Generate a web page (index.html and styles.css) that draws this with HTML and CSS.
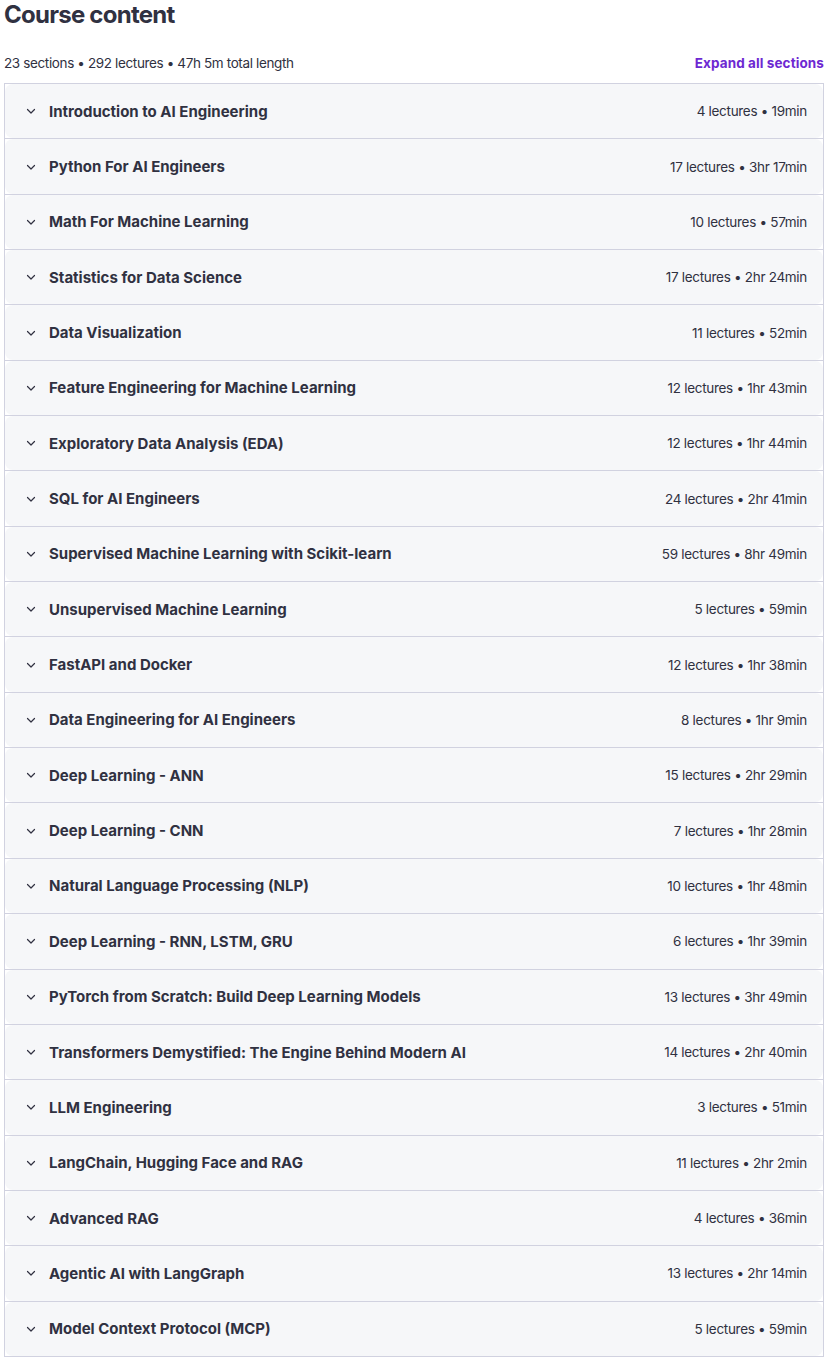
FILE: index.html
```html
<!DOCTYPE html>
<html lang="en">
<head>
  <meta charset="utf-8">
  <title>Course content</title>
  <link rel="stylesheet" href="styles.css">
</head>
<body>
  <section class="curriculum">
    <h2 class="curriculum-title">Course content</h2>

    <div class="curriculum-bar">
      <span class="curriculum-summary">23 sections • 292 lectures • 47h 5m total length</span>
      <button type="button" class="expand-all">Expand all sections</button>
    </div>

    <div class="accordion" id="accordion"></div>
  </section>

  <script>
    var sections = [
      ['Introduction to AI Engineering', '4 lectures • 19min'],
      ['Python For AI Engineers', '17 lectures • 3hr 17min'],
      ['Math For Machine Learning', '10 lectures • 57min'],
      ['Statistics for Data Science', '17 lectures • 2hr 24min'],
      ['Data Visualization', '11 lectures • 52min'],
      ['Feature Engineering for Machine Learning', '12 lectures • 1hr 43min'],
      ['Exploratory Data Analysis (EDA)', '12 lectures • 1hr 44min'],
      ['SQL for AI Engineers', '24 lectures • 2hr 41min'],
      ['Supervised Machine Learning with Scikit-learn', '59 lectures • 8hr 49min'],
      ['Unsupervised Machine Learning', '5 lectures • 59min'],
      ['FastAPI and Docker', '12 lectures • 1hr 38min'],
      ['Data Engineering for AI Engineers', '8 lectures • 1hr 9min'],
      ['Deep Learning - ANN', '15 lectures • 2hr 29min'],
      ['Deep Learning - CNN', '7 lectures • 1hr 28min'],
      ['Natural Language Processing (NLP)', '10 lectures • 1hr 48min'],
      ['Deep Learning - RNN, LSTM, GRU', '6 lectures • 1hr 39min'],
      ['PyTorch from Scratch: Build Deep Learning Models', '13 lectures • 3hr 49min'],
      ['Transformers Demystified: The Engine Behind Modern AI', '14 lectures • 2hr 40min'],
      ['LLM Engineering', '3 lectures • 51min'],
      ['LangChain, Hugging Face and RAG', '11 lectures • 2hr 2min'],
      ['Advanced RAG', '4 lectures • 36min'],
      ['Agentic AI with LangGraph', '13 lectures • 2hr 14min'],
      ['Model Context Protocol (MCP)', '5 lectures • 59min']
    ];

    var chevron = '<svg class="chevron" width="12" height="12" viewBox="0 0 24 24" aria-hidden="true">' +
      '<path d="M5 9l7 7 7-7" fill="none" stroke="currentColor" stroke-width="2.4" stroke-linecap="round" stroke-linejoin="round"/></svg>';

    var html = '';
    for (let i = 0; i < sections.length; i++) {
      html += '<div class="panel"><div class="panel-header">' + chevron +
        '<span class="panel-title">' + sections[i][0] + '</span>' +
        '<span class="panel-meta">' + sections[i][1] + '</span></div></div>';
    }
    document.getElementById('accordion').innerHTML = html;
  </script>
</body>
</html>
```

FILE: styles.css
```css
body {
  margin: 0;
  background-color: white;
  color: #303141;
  font-family: Inter, "Liberation Sans", sans-serif;
}

.curriculum {
  padding: 0 4px;
}

.curriculum-title {
  margin: 0;
  padding-top: 1px;
  font-size: 24px;
  line-height: 28px;
  font-weight: 700;
  letter-spacing: -0.75px;
}

.curriculum-bar {
  display: flex;
  justify-content: space-between;
  align-items: center;
  margin-top: 23px;
  height: 22px;
  margin-bottom: 9px;
}

.curriculum-summary {
  font-size: 13.5px;
  letter-spacing: -0.37px;
}

.expand-all {
  border: none;
  background: none;
  padding: 0;
  font-family: inherit;
  font-size: 13.5px;
  font-weight: 700;
  letter-spacing: 0.1px;
  color: #6d28d2;
  cursor: pointer;
}

.accordion {
  border: 1px solid #d1d2e0;
}

.panel {
  border-bottom: 1px solid #d1d2e0;
}

.panel:last-child {
  border-bottom: none;
}

.panel-header {
  display: flex;
  align-items: center;
  height: 54.35px;
  padding: 0 16px 0 20px;
  background-color: #f6f7f9;
  border-radius: 8px;
}

.chevron {
  flex: none;
  color: #303141;
  margin-right: 12px;
}

.panel-title {
  flex: 1;
  font-size: 15px;
  font-weight: 700;
}

.panel-meta {
  font-size: 13.5px;
  letter-spacing: -0.3px;
  white-space: nowrap;
}
```
